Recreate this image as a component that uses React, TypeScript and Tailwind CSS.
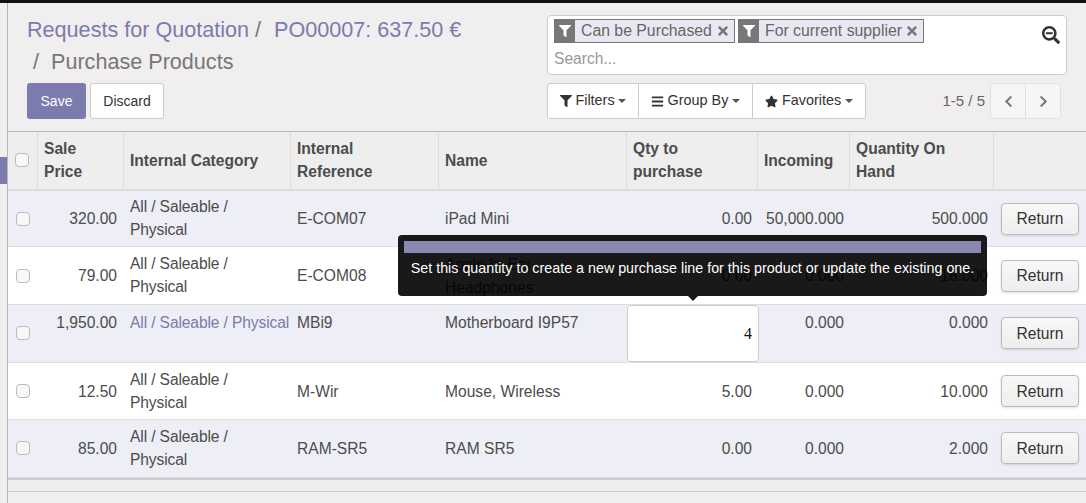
import { FaFilter, FaTimes, FaSearchMinus, FaBars, FaStar, FaChevronLeft, FaChevronRight } from "react-icons/fa";

interface Product {
  price: string;
  category: string;
  ref: string;
  name: string;
  qty: string;
  incoming: string;
  onHand: string;
}

const products: Product[] = [
  { price: "320.00", category: "All / Saleable / Physical", ref: "E-COM07", name: "iPad Mini", qty: "0.00", incoming: "50,000.000", onHand: "500.000" },
  { price: "79.00", category: "All / Saleable / Physical", ref: "E-COM08", name: "Apple In-Ear Headphones", qty: "0.00", incoming: "0.000", onHand: "18.000" },
  { price: "1,950.00", category: "All / Saleable / Physical", ref: "MBi9", name: "Motherboard I9P57", qty: "4", incoming: "0.000", onHand: "0.000" },
  { price: "12.50", category: "All / Saleable / Physical", ref: "M-Wir", name: "Mouse, Wireless", qty: "5.00", incoming: "0.000", onHand: "10.000" },
  { price: "85.00", category: "All / Saleable / Physical", ref: "RAM-SR5", name: "RAM SR5", qty: "0.00", incoming: "0.000", onHand: "2.000" },
];

const Check = () => (
  <div className="mx-auto h-[14px] w-[14px] rounded-[4px] border border-[#bbb] bg-[#f8f8f8]" />
);

const Facet = ({ label, className }: { label: string; className: string }) => (
  <div className={`flex h-[24px] items-stretch border border-[#777] bg-[#e8e8f2] ${className}`}>
    <div className="flex w-[20px] shrink-0 items-center justify-center bg-[#777] text-white">
      <FaFilter size={12} />
    </div>
    <span className="flex flex-1 items-center justify-between pl-[6px] pr-[4px] text-[15.8px] text-[#666]">
      {label}
      <FaTimes size={14} className="text-[#777]" />
    </span>
  </div>
);

const Caret = () => (
  <span className="inline-block border-x-[4px] border-t-[4px] border-x-transparent border-t-[#555] align-middle" />
);

const App = () => {
  return (
    <div className="relative flex h-[503px] w-[1086px] flex-col overflow-hidden bg-[#f0eeee] font-['Liberation_Sans',sans-serif] text-[15.6px] text-[#4c4c4c]">
      <div className="h-[3px] bg-[#111]" />
      <div className="flex min-h-0 flex-1">
        <div className="w-[8px] shrink-0 border-r border-[#b5b5b5] pt-[154px]">
          <div className="h-[27px] w-[7px] bg-[#7c7bad]" />
        </div>
        <div className="min-w-0 flex-1">
          <div className="flex h-[129px] justify-between border-b border-[#b5b5b5] pl-[19px] pr-[19px]">
            <div className="w-[500px]">
              <div className="mt-[11px] text-[21.6px] leading-[32px] text-[#7c7bad]">
                Requests for Quotation <span className="text-[#777]">/</span>
                <span className="ml-[13px]">PO00007: 637.50 €</span>
              </div>
              <div className="text-[21.6px] leading-[31px] text-[#777]">
                <span className="ml-[6px]">/</span>
                <span className="ml-[12px]">Purchase Products</span>
              </div>
              <div className="mt-[6px] flex gap-[4px] text-[14px]">
                <button className="h-[36px] w-[59px] rounded-[3px] bg-[#7c7bad] text-white">Save</button>
                <button className="h-[36px] w-[74px] rounded-[3px] border border-[#ccc] bg-white text-[#333]">Discard</button>
              </div>
            </div>
            <div className="w-[520px]">
              <div className="relative mt-[12px] h-[60px] rounded-[4px] border border-[#ccc] bg-white px-[6px] pt-[3px]">
                <div className="flex gap-[3px]">
                  <Facet label="Can be Purchased" className="w-[181px]" />
                  <Facet label="For current supplier" className="w-[186px]" />
                </div>
                <div className="mt-[4px] text-[#999]">Search...</div>
                <FaSearchMinus size={18} className="absolute right-[6px] top-[10px] text-[#333]" />
              </div>
              <div className="mt-[8px] flex items-center justify-between pr-[6px]">
                <div className="flex h-[36px] rounded-[3px] border border-[#ccc] bg-white text-[14.4px] text-[#333]">
                  <div className="flex w-[90px] items-center justify-center gap-[3px]"><FaFilter size={12} />Filters<Caret /></div>
                  <div className="flex w-[114px] items-center justify-center gap-[4px] border-l border-[#ccc]"><FaBars size={13} />Group By<Caret /></div>
                  <div className="flex w-[113px] items-center justify-center gap-[4px] border-l border-[#ccc]"><FaStar size={13} />Favorites<Caret /></div>
                </div>
                <div className="flex items-center gap-[5px]">
                  <span className="text-[15px] text-[#666]">1-5 / 5</span>
                  <div className="flex h-[36px] rounded-[3px] border border-[#e2e2e2] bg-[#f6f6f6] text-[#777]">
                    <div className="flex w-[34px] items-center justify-center"><FaChevronLeft size={13} /></div>
                    <div className="flex w-[35px] items-center justify-center border-l border-[#e2e2e2]"><FaChevronRight size={13} /></div>
                  </div>
                </div>
              </div>
            </div>
          </div>
          <table className="w-[1078px] table-fixed border-collapse">
            <colgroup>
              <col className="w-[29px]" />
              <col className="w-[86px]" />
              <col className="w-[167px]" />
              <col className="w-[148px]" />
              <col className="w-[188px]" />
              <col className="w-[131px]" />
              <col className="w-[92px]" />
              <col className="w-[144px]" />
              <col className="w-[93px]" />
            </colgroup>
            <thead>
              <tr className="h-[57.6px] border-b-2 border-[#ddd] bg-[#eeeeee] text-left font-bold leading-[23px] text-[#4c4c4c]">
                <th className="border-r border-[#ddd]"><Check /></th>
                <th className="border-r border-[#ddd] px-[6.5px]">Sale Price</th>
                <th className="border-r border-[#ddd] px-[6.5px]">Internal Category</th>
                <th className="border-r border-[#ddd] px-[6.5px]">Internal Reference</th>
                <th className="border-r border-[#ddd] px-[6.5px]">Name</th>
                <th className="border-r border-[#ddd] px-[6.5px]">Qty to purchase</th>
                <th className="border-r border-[#ddd] px-[6.5px]">Incoming</th>
                <th className="border-r border-[#ddd] px-[6.5px]">Quantity On Hand</th>
                <th />
              </tr>
            </thead>
            <tbody>
              {products.map((p, i) => {
                const editing = i === 2;
                return (
                  <tr key={p.ref} className={`h-[57.4px] border-b border-[#ddd] leading-[23px] ${i % 2 === 0 ? "bg-[#eeeef6]" : "bg-white"}`}>
                    <td><Check /></td>
                    <td className={`pl-[6px] pr-[6px] text-right ${editing ? "align-top pt-[6px]" : ""}`}>{p.price}</td>
                    <td className={`px-[7px] tracking-[-0.12px] ${editing ? "align-top whitespace-nowrap pt-[6px] text-[#7c7bad]" : "pb-[1px]"}`}>{p.category}</td>
                    <td className={`px-[7px] ${editing ? "align-top pt-[6px]" : ""}`}>{p.ref}</td>
                    <td className={`px-[7px] ${editing ? "align-top pt-[6px]" : ""}`}>{p.name}</td>
                    {editing ? (
                      <td className="p-0">
                        <div className="ml-[1px] flex h-[57px] w-[132px] items-center justify-end rounded-[4px] border border-[#ccc] bg-white px-[6px] font-['Liberation_Serif',serif] text-[16px] text-[#111]">{p.qty}</div>
                      </td>
                    ) : (
                      <td className="pl-[6px] pr-[5px] text-right">{p.qty}</td>
                    )}
                    <td className={`pl-[6px] pr-[5px] text-right ${editing ? "align-top pt-[6px]" : ""}`}>{p.incoming}</td>
                    <td className={`pl-[6px] pr-[5px] text-right ${editing ? "align-top pt-[6px]" : ""}`}>{p.onHand}</td>
                    <td className="pl-[8px]">
                      <button className="h-[32px] w-[78px] rounded-[4px] border border-[#bbb] bg-linear-to-b from-[#f8f8f8] to-[#eee] text-[#333] shadow-sm">Return</button>
                    </td>
                  </tr>
                );
              })}
            </tbody>
          </table>
          <div className="h-[14px] border-t-2 border-b border-[#ccc] bg-[#eeeeee]" />
        </div>
      </div>
      <div className="absolute left-[398px] top-[235px] h-[61px] w-[589px] rounded-[4px] bg-black/90 px-[6px] pt-[6px] text-center text-[14.3px] leading-[20px] text-white">
        <div className="h-[12px] bg-[#8988b3]" />
        <div className="whitespace-nowrap pt-[5px]">Set this quantity to create a new purchase line for this product or update the existing one.</div>
        <div className="absolute left-1/2 top-full -ml-[5px] border-x-[5px] border-t-[5px] border-x-transparent border-t-black/90" />
      </div>
    </div>
  );
};

export default App;
